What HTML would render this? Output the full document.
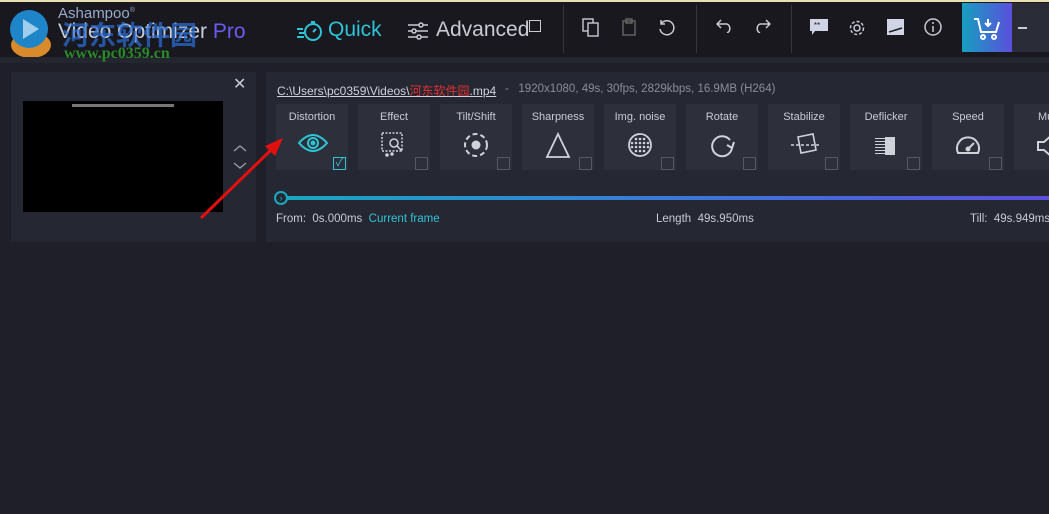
<!DOCTYPE html>
<html><head><meta charset="utf-8"><style>
*{margin:0;padding:0;box-sizing:border-box}
body{width:1049px;height:514px;background:#1e1f28;font-family:"Liberation Sans","Noto Sans CJK SC",sans-serif;position:relative;overflow:hidden;color:#c8cad4}
.top{position:absolute;left:0;top:0;width:1049px;height:57px;background:#18181e;border-top:2px solid #e8e0b0}
.a{position:absolute;white-space:nowrap}
.sep{position:absolute;top:3px;width:1px;height:48px;background:#34363f}
.panel{position:absolute;background:#252833}
.tile{position:absolute;top:104px;width:72px;height:66px;background:#2d303b}
.tile .t{position:absolute;top:7px;width:100%;text-align:center;font-size:11px;color:#c8cad4}
.tile .cb{position:absolute;right:2px;bottom:0;width:13px;height:13px;border:1px solid #555966}
.tile svg{position:absolute;left:22px;top:28px}
</style></head><body>
<div class="top">
 <svg class="a" style="left:5px;top:3px" width="52" height="56" viewBox="0 0 52 56">
  <ellipse cx="26" cy="40" rx="20" ry="13" fill="#d98a2a"/>
  <circle cx="24" cy="24" r="19" fill="#1e86c8"/>
  <path d="M18 14 L34 24 L18 34 Z" fill="#bfe0f5" opacity=".8"/>
 </svg>
 <div class="a" style="left:58px;top:3px;font-size:15px;color:#9ac">Ashampoo<sup style="font-size:7px">®</sup></div>
 <div class="a" style="left:58px;top:18px;font-size:21px;color:#c8d0e0">Video Optimizer <span style="color:#6b5cf0">Pro</span></div>
 <div class="a" style="left:62px;top:12px;font-size:27px;font-weight:bold;color:#2b6fd8;opacity:.7;font-family:'Noto Sans CJK SC',sans-serif">河东软件园</div>
 <svg class="a" style="left:296px;top:17px" width="28" height="24" viewBox="0 0 28 24" fill="none" stroke="#2ec4d6" stroke-width="2"><circle cx="17" cy="13" r="8"/><path d="M17 13l3-3M15 3h4M1 10h6M3 14h5M1 18h7"/></svg>
 <div class="a" style="left:328px;top:16px;font-size:21px;color:#2ec4d6">Quick</div>
 <svg class="a" style="left:408px;top:20px" width="20" height="18" viewBox="0 0 20 18" fill="none" stroke="#c8cad4" stroke-width="1.5"><path d="M0 3h20M0 9h20M0 15h20"/><circle cx="13" cy="3" r="2" fill="#18181e"/><circle cx="6" cy="9" r="2" fill="#18181e"/><circle cx="11" cy="15" r="2" fill="#18181e"/></svg>
 <div class="a" style="left:436px;top:16px;font-size:21px;color:#c8cad4">Advanced</div>
 <div class="a" style="left:529px;top:18px;width:12px;height:12px;border:1.5px solid #c8cad4"></div>
 <div class="sep" style="left:563px"></div><div class="sep" style="left:696px"></div><div class="sep" style="left:791px"></div>
 <svg class="a" style="left:582px;top:16px" width="18" height="20" viewBox="0 0 18 20" fill="none" stroke="#c8cad4" stroke-width="1.4"><rect x="1" y="1" width="10" height="12"/><rect x="6" y="5" width="10" height="13" fill="#18181e"/></svg>
 <svg class="a" style="left:622px;top:16px" width="14" height="18" viewBox="0 0 14 18" fill="none" stroke="#666" stroke-width="1.4"><rect x="1" y="3" width="12" height="14"/><rect x="4" y="1" width="6" height="4"/></svg>
 <svg class="a" style="left:658px;top:17px" width="18" height="18" viewBox="0 0 18 18" fill="none" stroke="#c8cad4" stroke-width="1.5"><path d="M3 5A7 7 0 1 1 2 10M3 1v4h4"/></svg>
 <svg class="a" style="left:716px;top:17px" width="18" height="14" viewBox="0 0 18 14" fill="none" stroke="#c8cad4" stroke-width="1.5"><path d="M5 1L1 5l4 4M1 5h10a5 5 0 0 1 0 9"/></svg>
 <svg class="a" style="left:753px;top:17px" width="18" height="14" viewBox="0 0 18 14" fill="none" stroke="#c8cad4" stroke-width="1.5"><path d="M13 1l4 4-4 4M17 5H7a5 5 0 0 0 0 9"/></svg>
 <svg class="a" style="left:810px;top:17px" width="18" height="17" viewBox="0 0 18 17"><path d="M0 0h18v12H5l-3 4v-4H0z" fill="#d0d4e4"/><text x="4" y="9" font-size="8" fill="#18181e">**</text></svg>
 <svg class="a" style="left:848px;top:17px" width="18" height="18" viewBox="0 0 18 18" fill="none" stroke="#c8cad4" stroke-width="1.5"><circle cx="9" cy="9" r="3"/><circle cx="9" cy="9" r="6.5" stroke-dasharray="3 2"/></svg>
 <svg class="a" style="left:887px;top:17px" width="17" height="16" viewBox="0 0 17 16"><rect width="17" height="16" fill="#d0d4e4"/><path d="M2 13L15 9" stroke="#18181e" stroke-width="1.5"/></svg>
 <svg class="a" style="left:924px;top:16px" width="18" height="18" viewBox="0 0 18 18" fill="none" stroke="#c8cad4" stroke-width="1.5"><circle cx="9" cy="9" r="8"/><path d="M9 8v6M9 4v2"/></svg>
 <div class="a" style="left:962px;top:1px;width:50px;height:49px;background:linear-gradient(90deg,#169fc0,#5b4fdc)"></div>
 <svg class="a" style="left:973px;top:15px" width="28" height="24" viewBox="0 0 28 24" fill="none" stroke="#fff" stroke-width="2"><path d="M1 2h4l3 13h15l3-10M15 2v7M12 6l3 3 3-3"/><circle cx="10" cy="20" r="2"/><circle cx="21" cy="20" r="2"/></svg>
 <div class="a" style="left:1012px;top:1px;width:37px;height:49px;background:#2a2d38"></div>
 <div class="a" style="left:1018px;top:25px;width:9px;height:1.5px;background:#c8cad4"></div>
</div>
<div class="a" style="left:0;top:57px;width:1049px;height:6px;background:#23252f"></div>
<div class="a" style="left:64px;top:45px;font-size:16px;font-weight:bold;color:#2a8a2a;font-family:'Liberation Serif',serif;z-index:5">www.pc0359.cn</div>

<div class="panel" style="left:11px;top:72px;width:245px;height:170px"></div>
<div class="a" style="left:233px;top:74px;font-size:16px;color:#c8cad4">✕</div>
<div class="a" style="left:23px;top:101px;width:200px;height:111px;background:#000"></div>
<div class="a" style="left:72px;top:104px;width:102px;height:3px;background:#777"></div>
<svg class="a" style="left:233px;top:144px" width="14" height="30" viewBox="0 0 14 30" fill="none" stroke="#9a9ca8" stroke-width="1.3"><path d="M1 7l6-5 6 5M1 19l6 5 6-5"/></svg>

<div class="panel" style="left:266px;top:72px;width:790px;height:170px"></div>
<div class="a" style="left:277px;top:82px;font-size:12px;color:#d0d2da;text-decoration:underline">C:\Users\pc0359\Videos\<span style="color:#e03030">河东软件园</span>.mp4</div>
<div class="a" style="left:505px;top:83px;font-size:11.5px;color:#8a8c98">-&nbsp;&nbsp; 1920x1080, 49s, 30fps, 2829kbps, 16.9MB (H264)</div>

<div class="tile" style="left:276px"><div class="t">Distortion</div>
 <svg width="30" height="22" viewBox="0 0 30 22" fill="none" stroke="#2ec4d6" stroke-width="2"><path d="M1 11Q15 -5 29 11Q15 27 1 11Z"/><circle cx="15" cy="11" r="5"/><circle cx="15" cy="11" r="1.5" fill="#2ec4d6"/></svg>
 <div class="cb" style="border-color:#2ec4d6;color:#2ec4d6;font-size:11px;line-height:11px;text-align:center">✓</div></div>
<div class="tile" style="left:358px"><div class="t">Effect</div>
 <svg width="28" height="26" viewBox="0 0 28 26" fill="none" stroke="#d0d2da" stroke-width="1.5"><rect x="2" y="1" width="20" height="18" stroke-dasharray="2 1.5"/><circle cx="14" cy="11" r="4"/><path d="M17 14l5 5"/><circle cx="7" cy="23" r="1" fill="#d0d2da"/><circle cx="12" cy="22" r="1" fill="#d0d2da"/></svg>
 <div class="cb"></div></div>
<div class="tile" style="left:440px"><div class="t">Tilt/Shift</div>
 <svg width="28" height="28" viewBox="0 0 28 28" fill="none" stroke="#d0d2da" stroke-width="2"><circle cx="14" cy="13" r="11" stroke-dasharray="5 3"/><circle cx="14" cy="13" r="3.5" fill="#d0d2da"/></svg>
 <div class="cb"></div></div>
<div class="tile" style="left:522px"><div class="t">Sharpness</div>
 <svg width="28" height="28" viewBox="0 0 28 28" fill="none" stroke="#d0d2da" stroke-width="1.8"><path d="M14 2L25 25H3Z"/></svg>
 <div class="cb"></div></div>
<div class="tile" style="left:604px"><div class="t">Img. noise</div>
 <svg width="28" height="28" viewBox="0 0 28 28"><circle cx="14" cy="13" r="11" fill="none" stroke="#d0d2da" stroke-width="1.8"/><g fill="#d0d2da"><circle cx="10" cy="7" r="1.3"/><circle cx="14" cy="7" r="1.3"/><circle cx="18" cy="7" r="1.3"/><circle cx="6" cy="11" r="1.3"/><circle cx="10" cy="11" r="1.3"/><circle cx="14" cy="11" r="1.3"/><circle cx="18" cy="11" r="1.3"/><circle cx="22" cy="11" r="1.3"/><circle cx="6" cy="15" r="1.3"/><circle cx="10" cy="15" r="1.3"/><circle cx="14" cy="15" r="1.3"/><circle cx="18" cy="15" r="1.3"/><circle cx="22" cy="15" r="1.3"/><circle cx="10" cy="19" r="1.3"/><circle cx="14" cy="19" r="1.3"/><circle cx="18" cy="19" r="1.3"/></g></svg>
 <div class="cb"></div></div>
<div class="tile" style="left:686px"><div class="t">Rotate</div>
 <svg width="28" height="28" viewBox="0 0 28 28" fill="none" stroke="#d0d2da" stroke-width="2"><path d="M22 8A10 10 0 1 0 24 16"/><path d="M19 13l5 3 2-6" /></svg>
 <div class="cb"></div></div>
<div class="tile" style="left:768px"><div class="t">Stabilize</div>
 <svg width="30" height="28" viewBox="0 0 30 28" fill="none" stroke="#d0d2da" stroke-width="1.6"><path d="M8 5l15-3 3 16-15 3z"/><path d="M1 13h28" stroke-dasharray="3 2"/></svg>
 <div class="cb"></div></div>
<div class="tile" style="left:850px"><div class="t">Deflicker</div>
 <svg width="28" height="28" viewBox="0 0 28 28"><g stroke="#d0d2da" stroke-width="1"><path d="M3 6.5h10M3 9.5h10M3 12.5h10M3 15.5h10M3 18.5h10M3 21.5h10"/></g><rect x="13" y="5" width="10" height="18" fill="#d0d2da"/></svg>
 <div class="cb"></div></div>
<div class="tile" style="left:932px"><div class="t">Speed</div>
 <svg width="28" height="28" viewBox="0 0 28 28" fill="none" stroke="#d0d2da" stroke-width="2"><path d="M4 21A11 11 0 1 1 24 21Z"/><path d="M14 17l6-6" /><circle cx="14" cy="17" r="1.5" fill="#d0d2da"/></svg>
 <div class="cb"></div></div>
<div class="tile" style="left:1014px"><div class="t" style="text-align:left;padding-left:24px">Mu</div>
 <svg width="28" height="28" viewBox="0 0 28 28" fill="none" stroke="#d0d2da" stroke-width="2"><path d="M2 10h6l8-7v22l-8-7H2z"/></svg></div>

<div class="a" style="left:280px;top:196px;width:769px;height:4px;background:linear-gradient(90deg,#18a8c0,#3a7ad8 50%,#5b4fdc)"></div>
<div class="a" style="left:274px;top:191px;width:14px;height:14px;border-radius:50%;border:2px solid #18a8c0;background:#252833;color:#18a8c0;font-size:9px;line-height:10px;text-align:center">›</div>
<div class="a" style="left:276px;top:213px;font-size:11.5px;color:#c8cad4">From:&nbsp; 0s.000ms&nbsp; <span style="color:#2ec4d6">Current frame</span></div>
<div class="a" style="left:656px;top:213px;font-size:11.5px;color:#c8cad4">Length&nbsp; 49s.950ms</div>
<div class="a" style="left:970px;top:213px;font-size:11.5px;color:#c8cad4">Till:&nbsp; 49s.949ms</div>

<svg class="a" style="left:195px;top:130px" width="95" height="95" viewBox="0 0 95 95"><path d="M6 88L78 18" stroke="#e01010" stroke-width="3"/><path d="M88 8L70 16L80 26Z" fill="#e01010"/></svg>
</body></html>
